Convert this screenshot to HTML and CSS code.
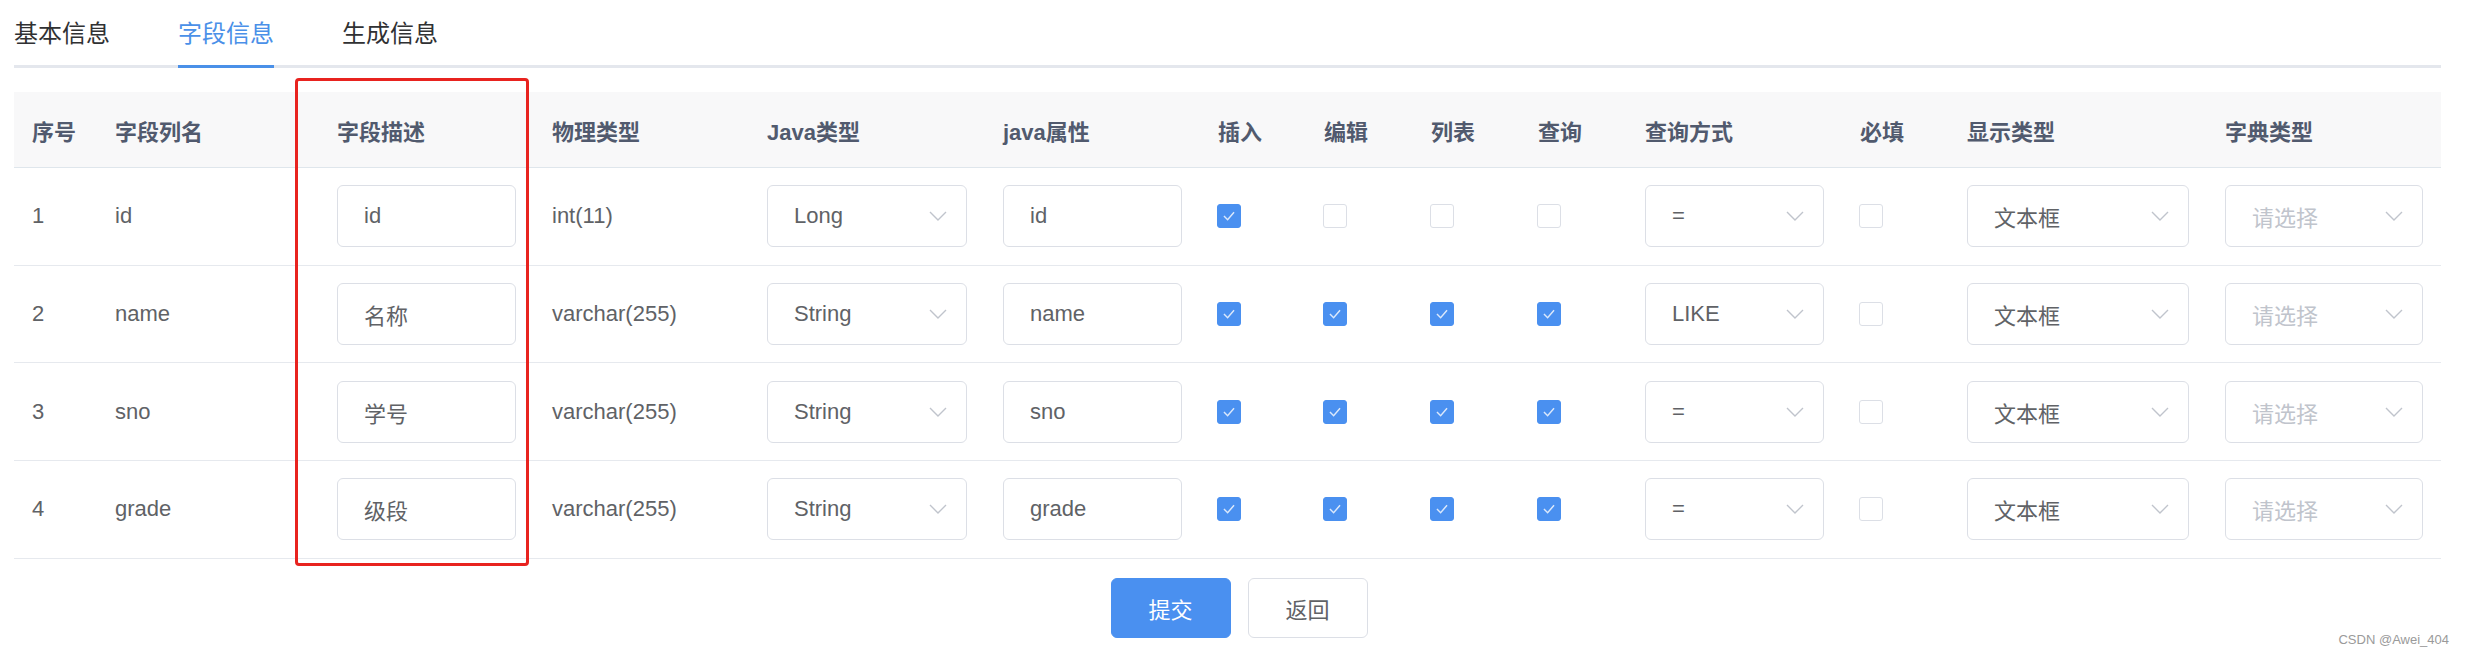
FILE: index.html
```html
<!DOCTYPE html>
<html lang="zh-CN">
<head>
<meta charset="utf-8">
<title>字段信息</title>
<link rel="stylesheet" href="styles.css">
</head>
<body>
<div class="page">
  <div class="tabs">
    <div class="tab">基本信息</div>
    <div class="tab active">字段信息</div>
    <div class="tab">生成信息</div>
  </div>

  <div class="table">
    <div class="row head">
      <div class="cell">序号</div>
      <div class="cell">字段列名</div>
      <div class="cell">字段描述</div>
      <div class="cell">物理类型</div>
      <div class="cell">Java类型</div>
      <div class="cell">java属性</div>
      <div class="cell">插入</div>
      <div class="cell">编辑</div>
      <div class="cell">列表</div>
      <div class="cell">查询</div>
      <div class="cell">查询方式</div>
      <div class="cell">必填</div>
      <div class="cell">显示类型</div>
      <div class="cell">字典类型</div>
    </div>

    <div class="row">
      <div class="cell">1</div>
      <div class="cell">id</div>
      <div class="cell"><div class="input">id</div></div>
      <div class="cell">int(11)</div>
      <div class="cell"><div class="select"><span>Long</span><svg class="arrow" viewBox="0 0 18 10"><polyline points="1,1 9,9 17,1"/></svg></div></div>
      <div class="cell"><div class="input">id</div></div>
      <div class="cell"><span class="cb on"><svg viewBox="0 0 24 24"><polyline points="6.5,12 10.5,16 17.5,8"/></svg></span></div>
      <div class="cell"><span class="cb"></span></div>
      <div class="cell"><span class="cb"></span></div>
      <div class="cell"><span class="cb"></span></div>
      <div class="cell"><div class="select"><span>=</span><svg class="arrow" viewBox="0 0 18 10"><polyline points="1,1 9,9 17,1"/></svg></div></div>
      <div class="cell"><span class="cb"></span></div>
      <div class="cell"><div class="select"><span>文本框</span><svg class="arrow" viewBox="0 0 18 10"><polyline points="1,1 9,9 17,1"/></svg></div></div>
      <div class="cell"><div class="select"><span class="ph">请选择</span><svg class="arrow" viewBox="0 0 18 10"><polyline points="1,1 9,9 17,1"/></svg></div></div>
    </div>

    <div class="row">
      <div class="cell">2</div>
      <div class="cell">name</div>
      <div class="cell"><div class="input">名称</div></div>
      <div class="cell">varchar(255)</div>
      <div class="cell"><div class="select"><span>String</span><svg class="arrow" viewBox="0 0 18 10"><polyline points="1,1 9,9 17,1"/></svg></div></div>
      <div class="cell"><div class="input">name</div></div>
      <div class="cell"><span class="cb on"><svg viewBox="0 0 24 24"><polyline points="6.5,12 10.5,16 17.5,8"/></svg></span></div>
      <div class="cell"><span class="cb on"><svg viewBox="0 0 24 24"><polyline points="6.5,12 10.5,16 17.5,8"/></svg></span></div>
      <div class="cell"><span class="cb on"><svg viewBox="0 0 24 24"><polyline points="6.5,12 10.5,16 17.5,8"/></svg></span></div>
      <div class="cell"><span class="cb on"><svg viewBox="0 0 24 24"><polyline points="6.5,12 10.5,16 17.5,8"/></svg></span></div>
      <div class="cell"><div class="select"><span>LIKE</span><svg class="arrow" viewBox="0 0 18 10"><polyline points="1,1 9,9 17,1"/></svg></div></div>
      <div class="cell"><span class="cb"></span></div>
      <div class="cell"><div class="select"><span>文本框</span><svg class="arrow" viewBox="0 0 18 10"><polyline points="1,1 9,9 17,1"/></svg></div></div>
      <div class="cell"><div class="select"><span class="ph">请选择</span><svg class="arrow" viewBox="0 0 18 10"><polyline points="1,1 9,9 17,1"/></svg></div></div>
    </div>

    <div class="row">
      <div class="cell">3</div>
      <div class="cell">sno</div>
      <div class="cell"><div class="input">学号</div></div>
      <div class="cell">varchar(255)</div>
      <div class="cell"><div class="select"><span>String</span><svg class="arrow" viewBox="0 0 18 10"><polyline points="1,1 9,9 17,1"/></svg></div></div>
      <div class="cell"><div class="input">sno</div></div>
      <div class="cell"><span class="cb on"><svg viewBox="0 0 24 24"><polyline points="6.5,12 10.5,16 17.5,8"/></svg></span></div>
      <div class="cell"><span class="cb on"><svg viewBox="0 0 24 24"><polyline points="6.5,12 10.5,16 17.5,8"/></svg></span></div>
      <div class="cell"><span class="cb on"><svg viewBox="0 0 24 24"><polyline points="6.5,12 10.5,16 17.5,8"/></svg></span></div>
      <div class="cell"><span class="cb on"><svg viewBox="0 0 24 24"><polyline points="6.5,12 10.5,16 17.5,8"/></svg></span></div>
      <div class="cell"><div class="select"><span>=</span><svg class="arrow" viewBox="0 0 18 10"><polyline points="1,1 9,9 17,1"/></svg></div></div>
      <div class="cell"><span class="cb"></span></div>
      <div class="cell"><div class="select"><span>文本框</span><svg class="arrow" viewBox="0 0 18 10"><polyline points="1,1 9,9 17,1"/></svg></div></div>
      <div class="cell"><div class="select"><span class="ph">请选择</span><svg class="arrow" viewBox="0 0 18 10"><polyline points="1,1 9,9 17,1"/></svg></div></div>
    </div>

    <div class="row">
      <div class="cell">4</div>
      <div class="cell">grade</div>
      <div class="cell"><div class="input">级段</div></div>
      <div class="cell">varchar(255)</div>
      <div class="cell"><div class="select"><span>String</span><svg class="arrow" viewBox="0 0 18 10"><polyline points="1,1 9,9 17,1"/></svg></div></div>
      <div class="cell"><div class="input">grade</div></div>
      <div class="cell"><span class="cb on"><svg viewBox="0 0 24 24"><polyline points="6.5,12 10.5,16 17.5,8"/></svg></span></div>
      <div class="cell"><span class="cb on"><svg viewBox="0 0 24 24"><polyline points="6.5,12 10.5,16 17.5,8"/></svg></span></div>
      <div class="cell"><span class="cb on"><svg viewBox="0 0 24 24"><polyline points="6.5,12 10.5,16 17.5,8"/></svg></span></div>
      <div class="cell"><span class="cb on"><svg viewBox="0 0 24 24"><polyline points="6.5,12 10.5,16 17.5,8"/></svg></span></div>
      <div class="cell"><div class="select"><span>=</span><svg class="arrow" viewBox="0 0 18 10"><polyline points="1,1 9,9 17,1"/></svg></div></div>
      <div class="cell"><span class="cb"></span></div>
      <div class="cell"><div class="select"><span>文本框</span><svg class="arrow" viewBox="0 0 18 10"><polyline points="1,1 9,9 17,1"/></svg></div></div>
      <div class="cell"><div class="select"><span class="ph">请选择</span><svg class="arrow" viewBox="0 0 18 10"><polyline points="1,1 9,9 17,1"/></svg></div></div>
    </div>
  </div>

  <div class="actions">
    <button class="btn primary">提交</button>
    <button class="btn">返回</button>
  </div>

  <div class="highlight"></div>
  <div class="watermark">CSDN @Awei_404</div>
</div>
</body>
</html>
```

FILE: styles.css
```css
html, body {
  margin: 0;
  padding: 0;
  background: #ffffff;
}

body {
  font-family: "Liberation Sans", Arial, "Noto Sans CJK SC", sans-serif;
  color: #606266;
  width: 2465px;
  height: 655px;
  overflow: hidden;
}

.page {
  position: relative;
  padding: 0 24px 0 14px;
  height: 655px;
  box-sizing: border-box;
}

/* Tabs */
.tabs {
  display: flex;
  height: 65px;
  border-bottom: 3px solid #e4e7ed;
}

.tab {
  position: relative;
  padding: 2px 34px 0;
  line-height: 63px;
  font-size: 24px;
  color: #303133;
}

.tab:first-child {
  padding-left: 0;
}

.tab.active {
  color: #4a90e8;
}

.tab.active::after {
  content: "";
  position: absolute;
  left: 34px;
  right: 34px;
  bottom: -3px;
  height: 3px;
  background: #4a90e8;
}

/* Table */
.table {
  margin-top: 24px;
}

.row {
  display: grid;
  grid-template-columns: 83px 222px 215px 215px 236px 215px 106px 107px 107px 107px 215px 107px 258px 1fr;
  height: 96.7px;
  border-bottom: 1px solid #e6e9ee;
  font-size: 22px;
  color: #606266;
}

.row.head {
  height: 75px;
  background: #f8f8f9;
  color: #515a6e;
  font-weight: bold;
  border-bottom: 1px solid #dfe6ec;
}

.cell {
  display: flex;
  align-items: center;
  padding: 0 18px;
  min-width: 0;
}

/* Inputs */
.input, .select {
  box-sizing: border-box;
  width: 100%;
  height: 62px;
  border: 1px solid #dcdfe6;
  border-radius: 6px;
  background: #fff;
  display: flex;
  align-items: center;
  font-size: 22px;
  color: #606266;
}

.input {
  padding: 0 26px;
}

.select {
  padding: 0 19px 0 26px;
  justify-content: space-between;
}

.select .ph {
  color: #c0c4cc;
}

.arrow {
  width: 18px;
  height: 10px;
  fill: none;
  stroke: #c0c4cc;
  stroke-width: 1.4;
}

/* Checkboxes */
.cb {
  box-sizing: border-box;
  display: block;
  width: 24px;
  height: 24px;
  border: 1px solid #dcdfe6;
  border-radius: 3px;
  background: #fff;
  margin-left: -1px;
}

.cb.on {
  background: #4a90f0;
  border-color: #4a90f0;
}

.cb svg {
  display: block;
  width: 22px;
  height: 22px;
  fill: none;
  stroke: #dbe8fb;
  stroke-width: 1.6;
}

/* Buttons */
.actions {
  display: flex;
  justify-content: center;
  gap: 17px;
  margin-top: 19px;
  padding-left: 23px;
}

.btn {
  box-sizing: border-box;
  width: 120px;
  height: 60px;
  border: 1px solid #dcdfe6;
  border-radius: 6px;
  background: #fff;
  font-family: "Liberation Sans", Arial, "Noto Sans CJK SC", sans-serif;
  font-size: 22px;
  color: #606266;
  padding: 0;
}

.btn.primary {
  background: #4a90f0;
  border-color: #4a90f0;
  color: #ffffff;
}

/* Annotation overlay */
.highlight {
  position: absolute;
  left: 295px;
  top: 78px;
  width: 234px;
  height: 488px;
  box-sizing: border-box;
  border: 3px solid #e8231f;
  border-radius: 4px;
}

.watermark {
  position: absolute;
  right: 16px;
  bottom: 8px;
  font-size: 13px;
  color: #9a9a9a;
}
```
